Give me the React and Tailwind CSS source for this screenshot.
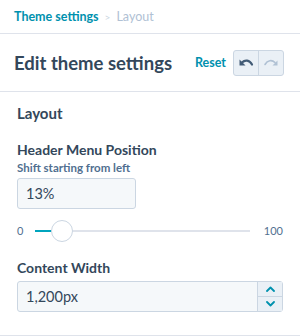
const UndoIcon = ({ color }) => (
  <svg width="16" height="12" viewBox="0 0 16 12" fill="none">
    <path d="M4 5.5 C7 2.5 11.5 3 14 7.5" stroke={color} strokeWidth="2.2" strokeLinecap="round" fill="none" />
    <path d="M1.5 2.5 L1.5 8.5 L7.5 8.5 Z" fill={color} />
  </svg>
)

const RedoIcon = ({ color }) => (
  <svg width="16" height="12" viewBox="0 0 16 12" fill="none">
    <path d="M12 5.5 C9 2.5 4.5 3 2 7.5" stroke={color} strokeWidth="1.6" strokeLinecap="round" fill="none" />
    <path d="M14.5 3.5 L14.5 8.5 L9.5 8.5 Z" fill={color} />
  </svg>
)

const Chevron = ({ up }) => (
  <svg width="9" height="6" viewBox="0 0 9 6">
    <path
      d={up ? "M1 5 L4.5 1.5 L8 5" : "M1 1 L4.5 4.5 L8 1"}
      stroke="#0091ae"
      strokeWidth="1.8"
      fill="none"
      strokeLinecap="round"
      strokeLinejoin="round"
    />
  </svg>
)

export default function App() {
  const value = 13

  return (
    <div className="w-[300px] h-[336px] bg-white text-[#33475b] overflow-hidden" style={{ fontFamily: "Lato, 'Noto Sans', sans-serif" }}>
      {/* breadcrumb */}
      <div className="h-[34px] border-b border-[#dfe3eb] flex items-center px-[14px] text-[12.5px] leading-[16px]">
        <span className="font-bold text-[#0091ae]">Theme settings</span>
        <span className="mx-[6px] text-[#cbd6e2] text-[10px]">&gt;</span>
        <span className="text-[#b0c1d4]">Layout</span>
      </div>

      {/* header */}
      <div className="h-[58px] border-b border-[#dfe3eb] flex items-center pl-[14px] pr-[16px]">
        <h1 className="text-[18.5px] leading-[22px] font-bold flex-1 pt-[1px]">Edit theme settings</h1>
        <span className="text-[12.5px] leading-[16px] font-bold text-[#0091ae] mr-[7px]">Reset</span>
        <div className="flex h-[26px] rounded-[3px] border border-[#cbd6e2] bg-[#eaf0f6] overflow-hidden">
          <div className="w-[25px] flex items-center justify-center border-r border-[#cbd6e2]">
            <UndoIcon color="#425b76" />
          </div>
          <div className="w-[24px] flex items-center justify-center">
            <RedoIcon color="#b0c1d4" />
          </div>
        </div>
      </div>

      {/* body */}
      <div className="px-[17px] pt-[12px] h-[244px] border-b border-[#dfe3eb]">
        <div className="text-[15px] leading-[18px] font-bold">Layout</div>

        <div className="mt-[19px] text-[14px] leading-[18px] font-bold">Header Menu Position</div>
        <div className="mt-[2px] text-[11.5px] leading-[14px] font-bold text-[#516f90]">Shift starting from left</div>
        <div className="mt-[3px] w-[119px] h-[31px] rounded-[3px] border border-[#cbd6e2] bg-[#f5f8fa] flex items-center px-[8px] text-[14.5px]">
          {value}%
        </div>

        {/* slider */}
        <div className="mt-[10px] flex items-center h-[24px]">
          <span className="text-[11px] text-[#516f90] w-[18px]">0</span>
          <div className="relative flex-1 h-[2px] bg-[#dfe3eb]">
            <div className="absolute left-0 top-0 h-[2px] w-[26px] bg-[#00a4bd]" />
            <div className="absolute left-[16px] top-[-10px] w-[22px] h-[22px] rounded-full bg-white border border-[#cbd6e2]" />
          </div>
          <span className="text-[11px] text-[#516f90] ml-[14px]">100</span>
        </div>

        <div className="mt-[16px] text-[14px] leading-[18px] font-bold">Content Width</div>
        <div className="mt-[4px] h-[31px] rounded-[3px] border border-[#cbd6e2] bg-[#f5f8fa] flex">
          <div className="flex-1 flex items-center px-[8px] text-[14.5px]">1,200px</div>
          <div className="w-[25px] border-l border-[#cbd6e2] flex flex-col bg-[#eaf0f6]">
            <div className="flex-1 flex items-center justify-center border-b border-[#cbd6e2]">
              <Chevron up />
            </div>
            <div className="flex-1 flex items-center justify-center">
              <Chevron />
            </div>
          </div>
        </div>
      </div>
    </div>
  )
}
